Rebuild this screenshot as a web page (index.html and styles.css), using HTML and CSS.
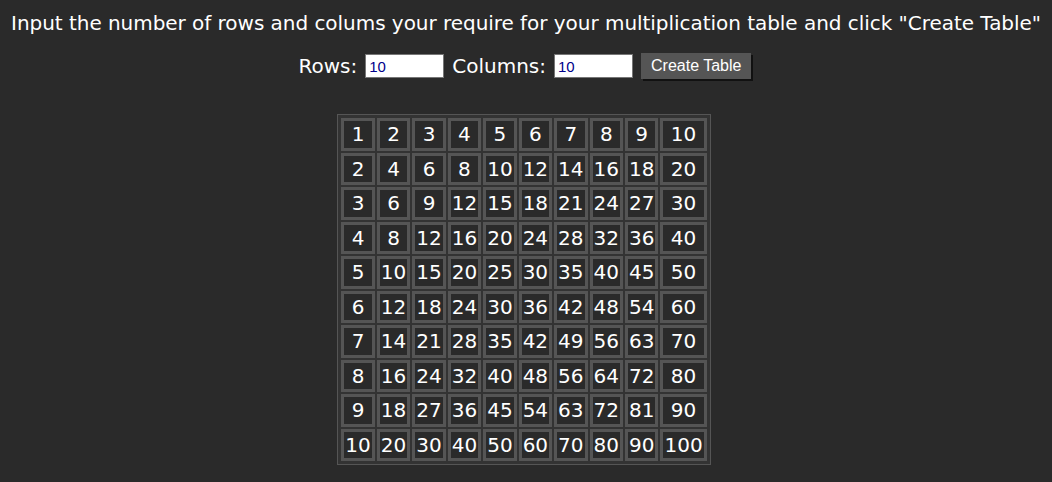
FILE: index.html
```html
<!DOCTYPE html>
<html>
<head>
<meta charset="utf-8">
<link rel="stylesheet" href="styles.css">
</head>
<body>
<h1 class="title">Input the number of rows and colums your require for your multiplication table and click "Create Table"</h1>
<div class="controls">
  <label class="lbl">Rows:</label>
  <input class="num" type="text" value="10">
  <label class="lbl">Columns:</label>
  <input class="num" type="text" value="10">
  <button class="btn">Create Table</button>
</div>
<div class="wrap">
<table class="grid" id="grid"></table>
</div>
<script src="app.js"></script>
</body>
</html>
```
FILE: styles.css
```css
body {
  margin: 0;
  background: #2a2a2a;
  color: #ffffff;
  font-family: "DejaVu Sans", Verdana, sans-serif;
}
.title {
  margin: 0;
  padding-top: 11px;
  font-size: 20px;
  font-weight: normal;
  text-align: center;
  line-height: 24px;
  letter-spacing: -0.04px;
}
.controls {
  display: flex;
  justify-content: center;
  align-items: center;
  gap: 8px;
  margin-top: 18px;
  height: 26px;
  padding-right: 2px;
}
.lbl {
  font-size: 20px;
}
.num {
  width: 71px;
  height: 20px;
  padding: 1px 3px;
  border: 1px solid #767676;
  font-family: "Liberation Sans", Arial, sans-serif;
  font-size: 15px;
  color: #00008b;
  background: #fff;
}
.btn {
  height: 26px;
  padding: 0 9px;
  background: #555;
  color: #fff;
  border: 1px solid #555;
  box-shadow: 2px 2px 0 #111;
  font-family: "Liberation Sans", Arial, sans-serif;
  font-size: 16px;
}
.wrap {
  display: flex;
  justify-content: center;
  margin-top: 35px;
  padding-right: 4px;
}
.grid {
  border: 1px solid #555;
  padding: 1px;
  border-spacing: 2px;
  background: #333;
}
.grid td {
  border: 3px solid #555;
  background: #2a2a2a;
  padding: 2px 1px;
  font-size: 20px;
  line-height: 22.5px;
  text-align: center;
}
```
FILE: app.js
```js
var t = document.getElementById('grid');
for (var r = 1; r <= 10; r++) {
  var tr = document.createElement('tr');
  for (var c = 1; c <= 10; c++) {
    var td = document.createElement('td');
    td.textContent = r * c;
    tr.appendChild(td);
  }
  t.appendChild(tr);
}
```
